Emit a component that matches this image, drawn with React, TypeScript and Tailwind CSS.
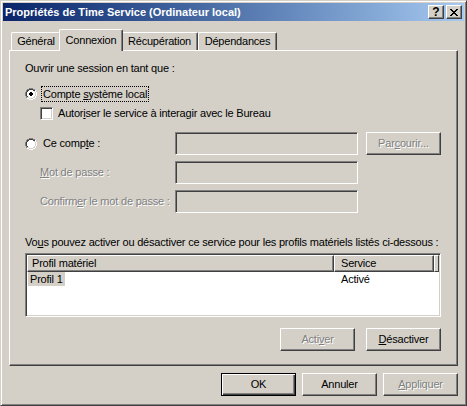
import React from 'react'

// classic 3D palette
// face #d4d0c8, light #ffffff, shadow #808080, dark #404040

const PX: Record<string, string> = {
  G: '#808080',
  D: '#404040',
  W: '#ffffff',
  L: '#d4d0c8',
  w: '#ffffff',
  B: '#000000',
}

const RADIO = [
  '....GGGG....',
  '..GGDDDDGG..',
  '.GDDwwwwDDW.',
  '.GDwwwwwwLW.',
  'GDwwwwwwwwLW',
  'GDwwwwwwwwLW',
  'GDwwwwwwwwLW',
  'GDwwwwwwwwLW',
  '.GDwwwwwwLW.',
  '.GLLwwwwLLW.',
  '..WWLLLLWW..',
  '....WWWW....',
]

const DOT = [
  '............',
  '............',
  '............',
  '............',
  '.....BB.....',
  '....BBBB....',
  '....BBBB....',
  '.....BB.....',
  '............',
  '............',
  '............',
  '............',
]

const CLOSE = [
  'BB....BB',
  '.BB..BB.',
  '..BBBB..',
  '...BB...',
  '..BBBB..',
  '.BB..BB.',
  'BB....BB',
]

function PixelMap({ rows, layers = [] }: { rows: string[]; layers?: string[][] }) {
  const h = rows.length
  const w = rows[0].length
  const cells: React.ReactNode[] = []
  ;[rows, ...layers].forEach((map, li) =>
    map.forEach((row, y) =>
      row.split('').forEach((c, x) => {
        if (c === '.') return
        cells.push(<rect key={`${li}-${x}-${y}`} x={x} y={y} width={1} height={1} fill={PX[c]} />)
      })
    )
  )
  return (
    <svg width={w} height={h} viewBox={`0 0 ${w} ${h}`} shapeRendering="crispEdges" className="shrink-0">
      {cells}
    </svg>
  )
}

function Radio({ checked }: { checked?: boolean }) {
  return <PixelMap rows={RADIO} layers={checked ? [DOT] : []} />
}

function Checkbox() {
  return (
    <div className="w-[13px] h-[13px] shrink-0 bg-white border border-t-[#808080] border-l-[#808080] border-r-white border-b-white shadow-[inset_1px_1px_#404040,inset_-1px_-1px_#d4d0c8]" />
  )
}

function Field() {
  return (
    <div className="w-[183px] h-[23px] shrink-0 bg-[#d4d0c8] border border-t-[#808080] border-l-[#808080] border-r-white border-b-white shadow-[inset_1px_1px_#404040,inset_-1px_-1px_#d4d0c8]" />
  )
}

function Button({ children, disabled, isDefault }: { children: React.ReactNode; disabled?: boolean; isDefault?: boolean }) {
  const bevel = isDefault
    ? 'border border-black shadow-[inset_1px_1px_#ffffff,inset_-1px_-1px_#404040,inset_-2px_-2px_#808080]'
    : 'border border-t-white border-l-white border-r-[#404040] border-b-[#404040] shadow-[inset_-1px_-1px_#808080]'
  return (
    <div className={`w-[75px] h-[23px] shrink-0 flex items-center justify-center ${bevel}`}>
      <span className={disabled ? 'text-[#808080] [text-shadow:1px_1px_0_#ffffff]' : ''}>{children}</span>
    </div>
  )
}

function Tab({ label, width, selected }: { label: string; width: number; selected?: boolean }) {
  return (
    <div
      style={{ width }}
      className={
        selected
          ? 'relative z-10 -mx-[2px] -mb-[1px] h-[22px] shrink-0 flex items-center justify-center pb-[1px] bg-[#d4d0c8] border-t border-l border-r border-t-white border-l-white border-r-[#404040] rounded-t-[2px] shadow-[inset_-1px_0_#808080]'
          : 'h-[18px] shrink-0 flex items-center justify-center bg-[#d4d0c8] border-t border-l border-r border-t-white border-l-white border-r-[#404040] rounded-t-[2px] shadow-[inset_-1px_0_#808080]'
      }
    >
      {label}
    </div>
  )
}

function TitleButton({ children }: { children: React.ReactNode }) {
  return (
    <div className="w-[16px] h-[14px] flex items-center justify-center bg-[#d4d0c8] border border-t-white border-l-white border-r-[#404040] border-b-[#404040] shadow-[inset_-1px_-1px_#808080]">
      {children}
    </div>
  )
}

const dim = 'text-[#808080] [text-shadow:1px_1px_0_#ffffff]'

export default function App() {
  return (
    <div className="w-[467px] h-[406px] bg-[#d4d0c8] text-black text-[11px] leading-[13px] tracking-[-0.2px] [font-family:'Liberation_Sans',Arial,sans-serif] select-none">
      <div className="w-full h-full flex flex-col p-[2px] border border-t-[#d4d0c8] border-l-[#d4d0c8] border-r-[#404040] border-b-[#404040] shadow-[inset_1px_1px_#ffffff,inset_-1px_-1px_#808080]">
        {/* title bar */}
        <div className="h-[18px] shrink-0 flex items-center justify-between pl-[2px] pr-[2px] bg-linear-to-r from-[#0a246a] to-[#a6caf0]">
          <span className="font-bold text-white tracking-[0px]">Propriétés de Time Service (Ordinateur local)</span>
          <div className="flex gap-[2px]">
            <TitleButton>
              <span className="font-bold text-[12px] leading-[12px] tracking-[0px] -mt-[1px]">?</span>
            </TitleButton>
            <TitleButton>
              <PixelMap rows={CLOSE} />
            </TitleButton>
          </div>
        </div>

        {/* tabs + page */}
        <div className="mx-[6px] mt-[8px] flex flex-col">
          <div className="h-[21px] flex items-end pl-[2px]">
            <Tab label="Général" width={50} />
            <Tab label="Connexion" width={64} selected />
            <Tab label="Récupération" width={77} />
            <Tab label="Dépendances" width={79} />
          </div>

          <div className="h-[316px] flex flex-col pl-[15px] pt-[11px] border border-t-white border-l-white border-r-[#404040] border-b-[#404040] shadow-[inset_-1px_-1px_#808080]">
            <div className="h-[13px]">Ouvrir une session en tant que :</div>

            <div className="mt-[11px] h-[16px] flex items-center">
              <Radio checked />
              <span className="ml-[4px] h-[16px] px-[1px] flex items-center border border-dotted border-black">
                Compte&nbsp;<u className="underline-offset-[1px]">s</u>ystème local
              </span>
            </div>

            <div className="mt-[5px] ml-[15px] h-[13px] flex items-center">
              <Checkbox />
              <span className="ml-[5px]">
                Autor<u className="underline-offset-[1px]">i</u>ser le service à interagir avec le Bureau
              </span>
            </div>

            <div className="mt-[12px] h-[23px] flex items-center">
              <div className="w-[150px] flex items-center">
                <Radio />
                <span className="ml-[6px]">
                  Ce comp<u className="underline-offset-[1px]">t</u>e :
                </span>
              </div>
              <Field />
              <div className="ml-[8px]">
                <Button disabled>
                  Par<u className="underline-offset-[1px]">c</u>ourir...
                </Button>
              </div>
            </div>

            <div className="mt-[6px] h-[23px] flex items-center">
              <div className={`w-[150px] pl-[15px] ${dim}`}>
                <u className="underline-offset-[1px]">M</u>ot de passe :
              </div>
              <Field />
            </div>

            <div className="mt-[6px] h-[23px] flex items-center">
              <div className={`w-[150px] pl-[15px] ${dim}`}>
                Confirm<u className="underline-offset-[1px]">e</u>r le mot de passe :
              </div>
              <Field />
            </div>

            <div className="mt-[23px] h-[13px]">
              Vo<u className="underline-offset-[1px]">u</u>s pouvez activer ou désactiver ce service pour les profils matériels listés ci-dessous :
            </div>

            <div className="mt-[4px] w-[416px] h-[64px] p-[1px] bg-white overflow-hidden border border-t-[#808080] border-l-[#808080] border-r-white border-b-white shadow-[inset_1px_1px_#404040,inset_-1px_-1px_#d4d0c8]">
              <div className="h-[17px] flex">
                <div className="w-[307px] shrink-0 flex items-center pl-[4px] bg-[#d4d0c8] border border-t-white border-l-white border-r-[#404040] border-b-[#404040] shadow-[inset_-1px_-1px_#808080]">
                  Profil matériel
                </div>
                <div className="w-[100px] shrink-0 flex items-center pl-[6px] bg-[#d4d0c8] border border-t-white border-l-white border-r-[#404040] border-b-[#404040] shadow-[inset_-1px_-1px_#808080]">
                  Service
                </div>
                <div className="flex-1 bg-[#d4d0c8] border border-t-white border-l-white border-r-[#404040] border-b-[#404040]" />
              </div>
              <div className="h-[14px] flex items-center">
                <div className="w-[314px] shrink-0">
                  <span className="ml-[1px] px-[2px] inline-block h-[14px] leading-[14px] bg-[#d4d0c8]">Profil 1</span>
                </div>
                <span>Activé</span>
              </div>
            </div>

            <div className="mt-[11px] w-[416px] flex justify-end gap-[11px]">
              <Button disabled>
                Acti<u className="underline-offset-[1px]">v</u>er
              </Button>
              <Button>
                <u className="underline-offset-[1px]">D</u>ésactiver
              </Button>
            </div>
          </div>
        </div>

        {/* dialog buttons */}
        <div className="mx-[6px] mt-[7px] flex justify-end gap-[6px]">
          <Button isDefault>OK</Button>
          <Button>Annuler</Button>
          <Button disabled>
            <u className="underline-offset-[1px]">A</u>ppliquer
          </Button>
        </div>
      </div>
    </div>
  )
}
